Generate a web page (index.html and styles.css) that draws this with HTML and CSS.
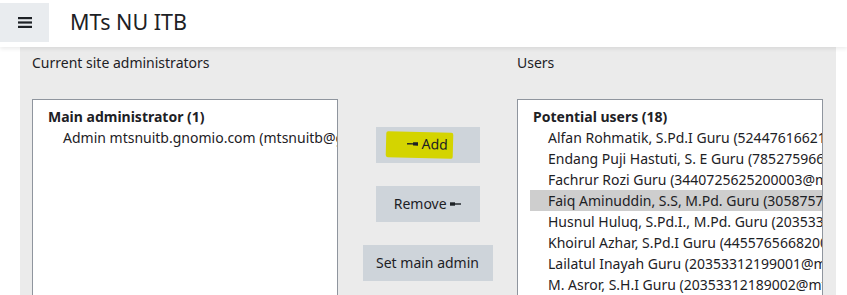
FILE: index.html
```html
<!DOCTYPE html>
<html lang="en">
<head>
<meta charset="utf-8">
<title>MTs NU ITB</title>
<link rel="stylesheet" href="styles.css">
</head>
<body>
<header class="navbar">
  <button class="drawer-toggle" aria-label="Menu">
    <svg width="14" height="11" viewBox="0 0 14 11"><rect x="0" y="0" width="14" height="2.2" fill="#1d2125"/><rect x="0" y="4.4" width="14" height="2.2" fill="#1d2125"/><rect x="0" y="8.8" width="14" height="2.2" fill="#1d2125"/></svg>
  </button>
  <span class="brand">MTs NU ITB</span>
</header>
<main class="panel">
  <section class="col side">
    <label class="col-label">Current site administrators</label>
    <div class="listbox">
      <div class="group-label">Main administrator (1)</div>
      <div class="option">Admin mtsnuitb.gnomio.com (mtsnuitb@gnomio.com)</div>
    </div>
  </section>
  <section class="col middle">
    <button class="btn"><span class="hl"><svg class="arr" width="11" height="4" viewBox="0 0 11 4"><rect x="0" y="1.3" width="7" height="1.4" fill="#1d2125"/><rect x="6" y="0.3" width="5" height="3.4" fill="#1d2125"/></svg> Add</span></button>
    <button class="btn">Remove <svg class="arr" width="11" height="4" viewBox="0 0 11 4"><rect x="0" y="0.3" width="5" height="3.4" fill="#1d2125"/><rect x="4" y="1.3" width="7" height="1.4" fill="#1d2125"/></svg></button>
    <button class="btn">Set main admin</button>
  </section>
  <section class="col side">
    <label class="col-label">Users</label>
    <div class="listbox">
      <div class="group-label">Potential users (18)</div>
      <div class="option">Alfan Rohmatik, S.Pd.I Guru (5244761662100003@mtsnuitb.gnomio.com)</div>
      <div class="option">Endang Puji Hastuti, S. E Guru (7852759660300002@mtsnuitb.gnomio.com)</div>
      <div class="option">Fachrur Rozi Guru (3440725625200003@mtsnuitb.gnomio.com)</div>
      <div class="option selected">Faiq Aminuddin, S.S, M.Pd. Guru (3058757658200013@mtsnuitb.gnomio.com)</div>
      <div class="option">Husnul Huluq, S.Pd.I., M.Pd. Guru (2035331219900@mtsnuitb.gnomio.com)</div>
      <div class="option">Khoirul Azhar, S.Pd.I Guru (4455765668200003@mtsnuitb.gnomio.com)</div>
      <div class="option">Lailatul Inayah Guru (20353312199001@mtsnuitb.gnomio.com)</div>
      <div class="option">M. Asror, S.H.I Guru (20353312189002@mtsnuitb.gnomio.com)</div>
    </div>
  </section>
</main>
</body>
</html>
```
FILE: styles.css
```css
* { box-sizing: border-box; }
html, body { margin: 0; padding: 0; background: #fff; overflow: hidden; }
body {
  font-family: "Noto Sans", "Open Sans", sans-serif;
  font-size: 14px;
  color: #1d2125;
  width: 847px;
  height: 295px;
}
.navbar {
  height: 47px;
  display: flex;
  align-items: flex-start;
  background: #fff;
  box-shadow: 0 2px 4px rgba(0,0,0,0.08);
  position: relative;
  z-index: 2;
}
.drawer-toggle {
  margin-top: 3px;
  width: 49px;
  height: 39px;
  border: 0;
  background: #e9ecef;
  display: flex;
  align-items: center;
  justify-content: center;
  padding: 0;
}
.brand {
  margin-left: 21px;
  margin-top: 8px;
  font-size: 21.5px;
  line-height: 28px;
  color: #1d2125;
}
.panel {
  margin-left: 20px;
  width: 816px;
  height: 260px;
  background: #ebebeb;
  padding: 5px 13px 0 12px;
  display: flex;
}
.col-label {
  display: block;
  line-height: 22px;
  height: 22px;
}
.side { width: 306px; flex: none; }
.middle {
  flex: 1;
  display: flex;
  flex-direction: column;
  align-items: center;
  gap: 23px;
  padding-top: 75px;
}
.listbox {
  margin-top: 25px;
  height: 220px;
  background: #fff;
  border: 1px solid #8f959e;
  padding: 6px 0 0 12px;
  overflow: hidden;
  white-space: nowrap;
}
.group-label {
  font-weight: 700;
  line-height: 21px;
  padding-left: 3px;
}
.option {
  line-height: 21px;
  padding-left: 18px;
}
.option.selected { background: #cecece; }
.btn {
  font-family: inherit;
  font-size: 14px;
  color: #1d2125;
  background: #ced4da;
  border: 0;
  height: 36px;
  padding: 0;
  line-height: 22px;
  white-space: nowrap;
}
.btn:nth-child(1) { width: 104px; }
.btn:nth-child(2) { width: 104px; }
.btn:nth-child(3) { width: 130px; }
.arr { vertical-align: middle; margin-bottom: 2px; }
.hl {
  display: inline-block;
  background: #d4d400;
  padding: 1px 5px 3px 21px;
  margin-left: -16px;
  transform: rotate(1.5deg);
  border-radius: 2px;
}
```
